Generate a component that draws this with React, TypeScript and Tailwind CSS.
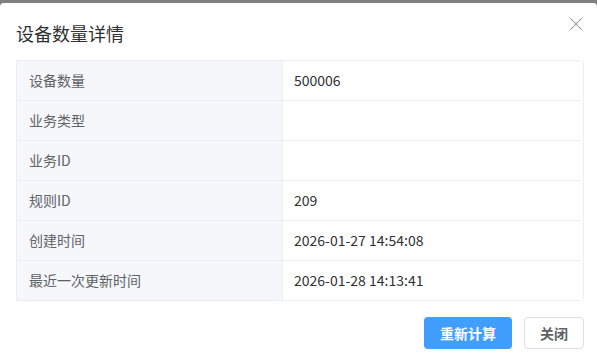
import { X } from 'lucide-react';

const rows: [string, string][] = [
  ['设备数量', '500006'],
  ['业务类型', ''],
  ['业务ID', ''],
  ['规则ID', '209'],
  ['创建时间', '2026-01-27 14:54:08'],
  ['最近一次更新时间', '2026-01-28 14:13:41'],
];

export default function App() {
  return (
    <div
      className="w-[597px] h-[355px] bg-[#808080] pt-[3px] overflow-hidden"
      style={{ fontFamily: '"Noto Sans CJK SC", "Noto Sans", sans-serif' }}
    >
      <div className="h-full bg-white rounded-tl-[4px] rounded-tr-[4px] flex flex-col">
        <div className="flex items-start justify-between pl-4 pr-[10px] pt-[18px] h-[57px]">
          <span className="text-[18px] text-[#303133] leading-6">设备数量详情</span>
          <X className="w-[22px] h-[22px] text-[#909399] -mt-[8px]" strokeWidth={1.15} />
        </div>
        <div className="mx-4 border-t border-l border-[#ebeef5]">
          {rows.map(([label, value]) => (
            <div key={label} className="grid grid-cols-[266px_301px] h-10 border-b border-[#ebeef5]">
              <div className="bg-[#f5f7fa] border-r border-[#ebeef5] pl-3 flex items-center text-[14px] text-[#606266]">
                {label}
              </div>
              <div className="border-r border-[#ebeef5] pl-[11px] flex items-center text-[14px] text-[#303133]">
                {value}
              </div>
            </div>
          ))}
        </div>
        <div className="flex justify-end gap-3 px-[13px] mt-[16px]">
          <button className="w-[88px] h-8 rounded-[4px] bg-[#409eff] text-white text-[14px] font-bold">
            重新计算
          </button>
          <button className="w-[60px] h-8 rounded-[4px] bg-white border border-[#dcdfe6] text-[#606266] text-[14px] font-bold">
            关闭
          </button>
        </div>
      </div>
    </div>
  );
}
